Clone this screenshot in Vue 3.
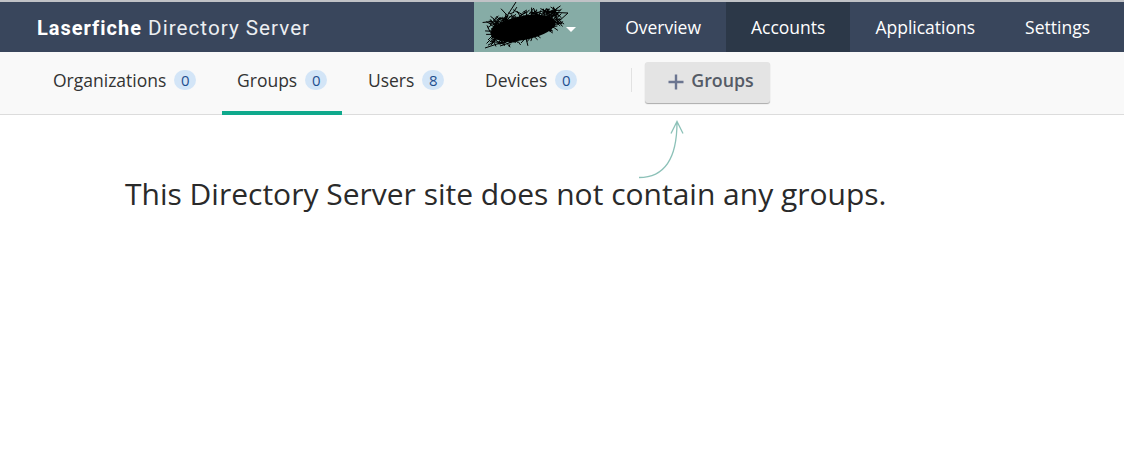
<script setup>
import { computed } from 'vue'

const tabs = [
  { label: 'Organizations', count: 0 },
  { label: 'Groups', count: 0, active: true },
  { label: 'Users', count: 8 },
  { label: 'Devices', count: 0 },
]
const links = [
  { label: 'Overview' },
  { label: 'Accounts', active: true },
  { label: 'Applications' },
  { label: 'Settings' },
]

// Redaction scribble: seeded short strokes in a slanted blob
const scribble = computed(() => {
  let s = 11
  const r = () => ((s = (s * 16807) % 2147483647) / 2147483647)
  let d = 'M11 48L38 39L60 33M42 2L24 30L14 40M34 16L18 44M70 12L94 13L84 22M58 14L76 9M26 46L50 38 '
  for (let i = 0; i < 520; i++) {
    const t = r()
    const x = 16 + t * 68
    const mid = 33 - t * 15
    const half = 16 - Math.abs(t - 0.35) * 12
    const y = mid + (r() * 2 - 1) * half
    const x2 = x + (r() - 0.5) * 16
    const y2 = y + (r() - 0.5) * 14
    d += `M${x.toFixed(1)} ${y.toFixed(1)}L${x2.toFixed(1)} ${y2.toFixed(1)}`
  }
  return d
})
</script>

<template>
  <div class="page">
    <header class="topbar">
      <div class="brand"><b>Laserfiche</b> Directory Server</div>
      <button class="org">
        <svg class="scribble" width="100" height="52" viewBox="0 0 100 52" aria-hidden="true">
          <path :d="scribble" fill="none" stroke="#000" stroke-width="1" />
          <ellipse cx="49" cy="28" rx="33" ry="12" transform="rotate(-11 49 28)" fill="#000" />
        </svg>
        <span class="caret"></span>
      </button>
      <nav class="links">
        <a v-for="l in links" :key="l.label" class="link" :class="{ on: l.active }">{{ l.label }}</a>
      </nav>
    </header>

    <div class="subbar">
      <div class="tabs">
        <a v-for="t in tabs" :key="t.label" class="tab" :class="{ on: t.active }">
          {{ t.label }}<span class="badge">{{ t.count }}</span>
        </a>
      </div>
      <span class="sep"></span>
      <button class="add">
        <svg width="16" height="16" viewBox="0 0 16 16" aria-hidden="true">
          <path d="M8 0.500V15.500M0.500 8H15.500" stroke="#6b7590" stroke-width="2.400" fill="none" />
        </svg>
        <span class="add-label">Groups</span>
      </button>
    </div>

    <main class="content">
      <svg class="arrow" width="60" height="70" viewBox="0 0 60 70" aria-hidden="true">
        <path d="M9 62.500C30 62.500 47 50 47 7M41 18.500L47 6.500L53 18.500" fill="none" stroke="#8cc1b8" stroke-width="1.300" />
      </svg>
      <p class="empty">This Directory Server site does not contain any groups.</p>
    </main>
  </div>
</template>

<style>
html, body { margin: 0; background: #fff; }
</style>

<style scoped>
.page {
  width: 1124px;
  height: 450px;
  overflow: hidden;
  font-family: "Open Sans", sans-serif;
  background: #fff;
}
.topbar {
  display: flex;
  height: 50px;
  background: #39465c;
  border-top: 2px solid #c0c2c6;
}
.brand {
  flex: 1;
  padding-left: 37px;
  line-height: 53px;
  font-family: Roboto, sans-serif;
  font-size: 20.700px;
  font-weight: 400;
  letter-spacing: 1px;
  color: #eceef1;
  white-space: nowrap;
}
.brand b { color: #fff; font-size: 20px; font-weight: 700; }
.org {
  position: relative;
  width: 126px;
  padding: 0;
  border: 0;
  background: #86aca6;
}
.scribble { position: absolute; left: 0; top: -2px; }
.caret {
  position: absolute;
  left: 92px;
  top: 25px;
  border-left: 5px solid transparent;
  border-right: 5px solid transparent;
  border-top: 5px solid #fff;
}
.links { display: flex; margin-right: 9px; }
.link {
  padding: 0 25px;
  font-size: 17.500px;
  line-height: 50px;
  color: #fff;
}
.link.on { background: #2c3848; }
.subbar {
  display: flex;
  align-items: flex-start;
  height: 62px;
  padding-left: 38px;
  background: #f9f9f9;
  border-bottom: 1px solid #dcdcdc;
}
.tabs { display: flex; gap: 10.700px; }
.tab {
  display: flex;
  align-items: center;
  gap: 8px;
  box-sizing: border-box;
  height: 63px;
  padding: 0 15px 4px;
  font-size: 17.500px;
  color: #333;
  border-bottom: 4px solid transparent;
}
.tab.on { border-bottom-color: #0fa98c; }
.badge {
  display: inline-block;
  min-width: 22px;
  height: 20px;
  border-radius: 10px;
  background: #d3e5f7;
  color: #1f4f8f;
  font-size: 15px;
  font-weight: 500;
  line-height: 20px;
  text-align: center;
}
.sep {
  width: 1px;
  height: 24px;
  margin: 16px 13px 0 39px;
  background: #e2e2e2;
}
.add {
  display: flex;
  align-items: center;
  gap: 7px;
  width: 125px;
  height: 41px;
  margin-top: 10px;
  padding: 0 0 2px 23px;
  border: 0;
  border-radius: 3px;
  background: #e4e4e4;
  box-shadow: 0 1px 1px #aaa;
  font-family: inherit;
  font-size: 17.800px;
  font-weight: 600;
  color: #555b66;
}
.add-label { margin-bottom: 4px; }
.content { position: relative; padding: 61px 0 0 125px; }
.arrow { position: absolute; left: 630px; top: 0; }
.empty {
  margin: 0;
  font-size: 30px;
  line-height: 36px;
  color: #2a2a2a;
  white-space: nowrap;
}
</style>
